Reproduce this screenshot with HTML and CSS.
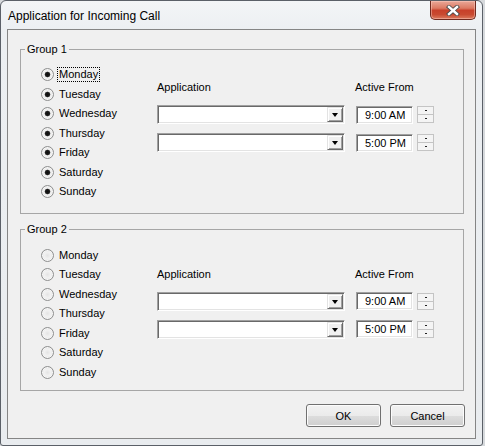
FILE: index.html
```html
<!DOCTYPE html>
<html>
<head>
<meta charset="utf-8">
<title>Application for Incoming Call</title>
<link rel="stylesheet" href="styles.css">
</head>
<body>
<div class="window">
  <div class="titlebar">
    <span class="title">Application for Incoming Call</span>
    <button class="close" aria-label="Close">
      <svg width="14" height="11" viewBox="0 0 14 11">
        <path d="M3 2 L11 9 M11 2 L3 9" stroke="#4b4b4b" stroke-width="4.2" stroke-linecap="square"/>
        <path d="M3 2 L11 9 M11 2 L3 9" stroke="#ffffff" stroke-width="2.4" stroke-linecap="square"/>
      </svg>
    </button>
  </div>
  <div class="client">
    <fieldset class="group group1">
      <legend>Group 1</legend>
      <div class="days">
        <label class="day"><input type="radio" class="radio" checked><span class="focus">Monday</span></label>
        <label class="day"><input type="radio" class="radio" checked><span>Tuesday</span></label>
        <label class="day"><input type="radio" class="radio" checked><span>Wednesday</span></label>
        <label class="day"><input type="radio" class="radio" checked><span>Thursday</span></label>
        <label class="day"><input type="radio" class="radio" checked><span>Friday</span></label>
        <label class="day"><input type="radio" class="radio" checked><span>Saturday</span></label>
        <label class="day"><input type="radio" class="radio" checked><span>Sunday</span></label>
      </div>
      <div class="apps">
        <div class="col-label">Application</div>
        <div class="combo"><span class="combo-btn"><span class="tri"></span></span></div>
        <div class="combo"><span class="combo-btn"><span class="tri"></span></span></div>
      </div>
      <div class="times">
        <div class="col-label">Active From</div>
        <div class="time-row"><div class="time">9:00 AM</div><div class="spin"><span><i></i></span><span><i></i></span></div></div>
        <div class="time-row"><div class="time">5:00 PM</div><div class="spin"><span><i></i></span><span><i></i></span></div></div>
      </div>
    </fieldset>
    <fieldset class="group group2">
      <legend>Group 2</legend>
      <div class="days">
        <label class="day"><input type="radio" class="radio"><span>Monday</span></label>
        <label class="day"><input type="radio" class="radio"><span>Tuesday</span></label>
        <label class="day"><input type="radio" class="radio"><span>Wednesday</span></label>
        <label class="day"><input type="radio" class="radio"><span>Thursday</span></label>
        <label class="day"><input type="radio" class="radio"><span>Friday</span></label>
        <label class="day"><input type="radio" class="radio"><span>Saturday</span></label>
        <label class="day"><input type="radio" class="radio"><span>Sunday</span></label>
      </div>
      <div class="apps">
        <div class="col-label">Application</div>
        <div class="combo"><span class="combo-btn"><span class="tri"></span></span></div>
        <div class="combo"><span class="combo-btn"><span class="tri"></span></span></div>
      </div>
      <div class="times">
        <div class="col-label">Active From</div>
        <div class="time-row"><div class="time">9:00 AM</div><div class="spin"><span><i></i></span><span><i></i></span></div></div>
        <div class="time-row"><div class="time">5:00 PM</div><div class="spin"><span><i></i></span><span><i></i></span></div></div>
      </div>
    </fieldset>
    <div class="actions">
      <button class="btn">OK</button>
      <button class="btn">Cancel</button>
    </div>
  </div>
</div>
</body>
</html>
```
FILE: styles.css
```css
* { box-sizing: border-box; }

body {
  margin: 0;
  width: 485px;
  height: 446px;
  overflow: hidden;
  background: #d6d9dc;
  font-family: "Liberation Sans", Arial, sans-serif;
  font-size: 11px;
  color: #000;
}

.window {
  width: 483px;
  height: 446px;
  border: 1px solid #5b6068;
  border-radius: 6px 6px 3px 3px;
  background: linear-gradient(180deg, #f3f5f7 0, #eceff2 30px, #e9ecef 100%);
  display: flex;
  flex-direction: column;
}

.titlebar {
  height: 28px;
  flex: none;
  display: flex;
  align-items: flex-start;
}

.title {
  font-size: 12px;
  line-height: 14px;
  margin: 8px 0 0 7px;
  color: #000;
}

.close {
  margin-left: auto;
  margin-right: 6px;
  width: 46px;
  height: 19px;
  padding: 0;
  border: 1px solid #6f2a1f;
  border-top: none;
  border-radius: 0 0 5px 5px;
  background: linear-gradient(180deg, #eaa898 0, #dc7a63 40%, #c8402a 52%, #c94a31 75%, #dc7a5e 100%);
  box-shadow: inset 0 0 0 1px rgba(255, 210, 200, 0.45);
  display: flex;
  align-items: center;
  justify-content: center;
}

.client {
  flex: 1;
  margin: 0 6px 6px 6px;
  border: 1px solid #858585;
  background: #f0f0f0;
  display: flex;
  flex-direction: column;
}

.group {
  margin: 13px 11px 0 12px;
  padding: 9px 0 11px 20px;
  border: 1px solid #a6a6a6;
  display: flex;
  min-width: 0;
}

.group2 {
  margin-top: 9px;
  padding-top: 10px;
  padding-bottom: 8px;
}

.group legend {
  margin-left: -16px;
  padding: 0 2px;
  line-height: 13px;
  font-size: 11px;
}

.days {
  width: 116px;
  display: flex;
  flex-direction: column;
}

.day {
  height: 19.5px;
  display: flex;
  align-items: center;
  gap: 3px;
}

.day span {
  line-height: 13px;
  padding: 0 1px;
  border: 1px solid transparent;
}

.day .focus {
  border: 1px dotted #000;
}

.radio {
  appearance: none;
  -webkit-appearance: none;
  margin: 0;
  width: 13px;
  height: 13px;
  flex: none;
  border-radius: 50%;
  border: 1px solid #8e8f8f;
  background: radial-gradient(circle at 50% 50%, #e4e4e4 0, #f2f2f2 45%, #dadada 80%, #c9c9c9 100%);
  box-shadow: inset 0 0 0 1px #f6f6f6;
}

.radio:checked {
  background:
    radial-gradient(circle at 50% 50%, #0c0c0c 0, #1a1a1a 2px, #555 2.6px, transparent 3.2px),
    radial-gradient(circle at 50% 50%, #e4e4e4 0, #f2f2f2 45%, #dadada 80%, #c9c9c9 100%);
}

.apps {
  width: 188px;
  display: flex;
  flex-direction: column;
  padding-top: 16px;
}

.times {
  margin-left: 10px;
  display: flex;
  flex-direction: column;
  padding-top: 16px;
}

.group2 .apps,
.group2 .times {
  padding-top: 22px;
}

.col-label {
  line-height: 13px;
  margin-bottom: 11px;
}

.combo {
  height: 19px;
  margin-bottom: 9px;
  background: #fff;
  border: 1px solid;
  border-color: #a0a0a0 #ffffff #ffffff #a0a0a0;
  box-shadow: inset 1px 1px 0 #696969, inset -1px -1px 0 #e3e3e3;
  display: flex;
  justify-content: flex-end;
  padding: 1px;
}

.combo-btn {
  width: 16px;
  height: 15px;
  background: #f0f0f0;
  border: 1px solid;
  border-color: #e3e3e3 #696969 #696969 #e3e3e3;
  box-shadow: inset 1px 1px 0 #ffffff, inset -1px -1px 0 #a0a0a0;
  display: flex;
  align-items: center;
  justify-content: center;
}

.tri {
  width: 0;
  height: 0;
  border-left: 3.5px solid transparent;
  border-right: 3.5px solid transparent;
  border-top: 4px solid #000;
  margin-top: 1px;
}

.time-row {
  display: flex;
  align-items: center;
  height: 19px;
  margin-bottom: 9px;
  gap: 4px;
}

.time {
  width: 57px;
  height: 18px;
  margin-left: 1px;
  background: #fff;
  border: 1px solid;
  border-color: #a0a0a0 #ffffff #ffffff #a0a0a0;
  box-shadow: inset 1px 1px 0 #696969, inset -1px -1px 0 #e3e3e3;
  line-height: 16px;
  padding-left: 8px;
}

.spin {
  width: 17px;
  height: 17px;
  display: flex;
  flex-direction: column;
}

.spin span {
  flex: 1;
  background: #f4f4f4;
  border: 1px solid #c4c4c4;
  display: flex;
  align-items: center;
  justify-content: center;
}

.spin span + span {
  border-top: 1px solid #c4c4c4;
  margin-top: -1px;
}

.spin i {
  width: 2px;
  height: 1px;
  background: #222;
}

.actions {
  display: flex;
  justify-content: flex-end;
  gap: 9px;
  margin: 13px 10px 0 0;
}

.btn {
  width: 75px;
  height: 23px;
  padding: 0;
  font-family: "Liberation Sans", Arial, sans-serif;
  font-size: 11px;
  color: #000;
  border: 1px solid #707070;
  border-radius: 3px;
  background: linear-gradient(180deg, #f2f2f2 0, #ebebeb 50%, #dddddd 51%, #cfcfcf 100%);
  box-shadow: inset 0 0 0 1px #fcfcfc;
}
```
